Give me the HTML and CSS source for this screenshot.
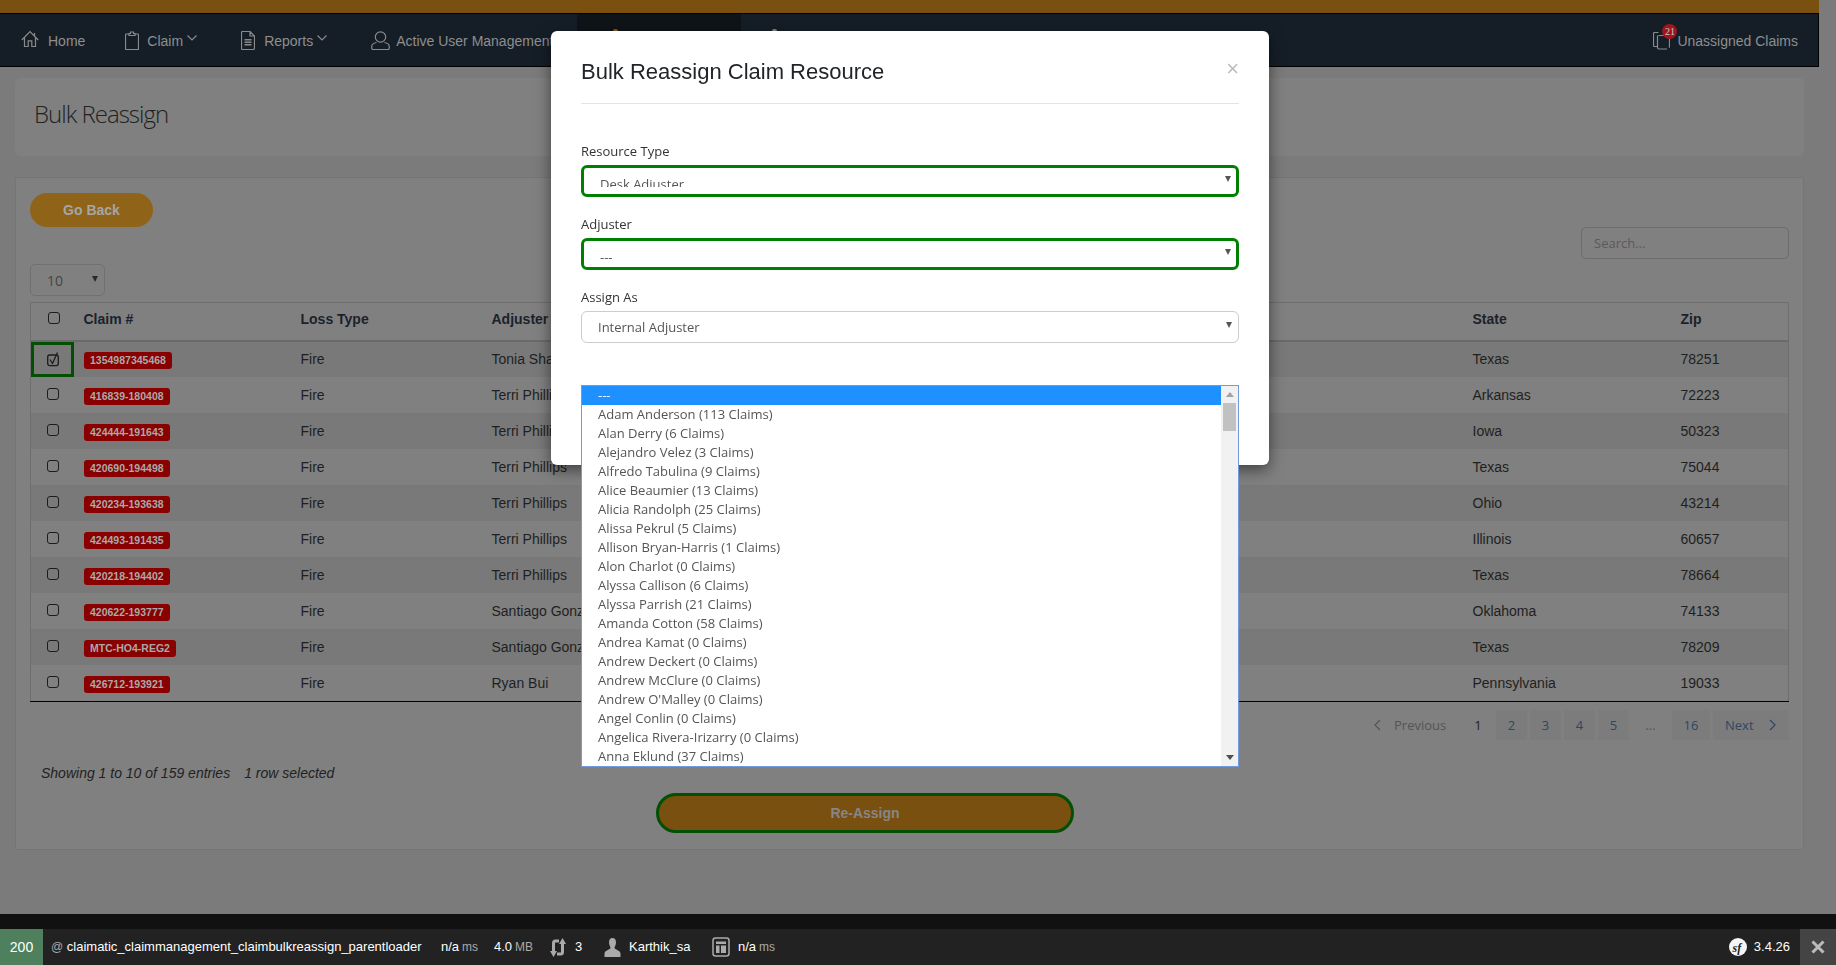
FILE: index.html
```html
<!DOCTYPE html>
<html lang="en">
<head>
<meta charset="utf-8">
<title>Bulk Reassign</title>
<link rel="stylesheet" href="styles.css">
</head>
<body>
<div class="page">
  <div class="topbar"></div>
  <nav class="nav">
    <a class="nav-item nav-home">
      <svg class="ic" width="18" height="18" viewBox="0 0 18 18"><path d="M.8 10 9 1.500 17.200 10M3.500 7.500v9h3.700v-5.700h3.600v5.700h3.700v-9M13.500 3v3"/></svg>
      <span>Home</span>
    </a>
    <a class="nav-item nav-claim">
      <svg class="ic" width="14" height="19" viewBox="0 0 14 19"><path d="M4 3H1a.5.5 0 0 0-.5.5v14.500a1 1 0 0 0 .5.500h12a.5.5 0 0 0 .5-.5V3.500A.5.5 0 0 0 13 3h-3M4 4.500V2.500h1.500V1h3v1.500H10v2z"/></svg>
      <span>Claim</span>
      <svg class="ic chev" width="10" height="6" viewBox="0 0 10 6"><path d="M.5.500 5 5l4.500-4.500"/></svg>
    </a>
    <a class="nav-item nav-reports">
      <svg class="ic" width="14" height="19" viewBox="0 0 14 19"><path d="M1.500.5h7.500l4.500 4.500v12a1.500 1.500 0 0 1-1.500 1.500H1.500A1 1 0 0 1 .5 17.500v-16a1 1 0 0 1 1-1zM9 .5V5h4.500"/><path class="bars" d="M3.500 8h7v1.500h-7zM3.500 10.500h7V12h-7zM3.500 13h7v1.500h-7z"/></svg>
      <span>Reports</span>
      <svg class="ic chev" width="10" height="6" viewBox="0 0 10 6"><path d="M.5.500 5 5l4.500-4.500"/></svg>
    </a>
    <a class="nav-item nav-users">
      <svg class="ic" width="19" height="19" viewBox="0 0 19 19"><circle cx="9.500" cy="6" r="5.200"/><path d="M5.500 11.500C2.500 12 .7 13.500.7 15.800v1.200c0 1 .7 1.500 1.500 1.500h14.600c.8 0 1.500-.5 1.500-1.500v-1.200c0-2.300-1.800-3.800-4.800-4.300"/></svg>
      <span>Active User Management</span>
    </a>
    <a class="nav-active"><i class="tip tip-orange"></i></a>
    <a class="nav-next"><i class="tip tip-gray"></i></a>
    <a class="nav-item nav-right">
      <span class="stack">
        <svg class="ic" width="17" height="19" viewBox="0 0 17 19"><path d="M4.500 15.500H1.500a1 1 0 0 1-1-1V2.500a1 1 0 0 1 1-1h4M5.500 4.500h10a1 1 0 0 1 1 1v10c0 .5-.2.7-.5 1M4.500 4.500v12a1.500 1.500 0 0 0 1.500 1.500h8"/></svg>
        <b class="count">21</b>
      </span>
      <span>Unassigned Claims</span>
    </a>
  </nav>

  <main class="content">
    <header class="card title-card"><h1>Bulk Reassign</h1></header>
    <section class="card main-card">
      <a class="go-back">Go Back</a>
      <div class="tools">
        <div class="length"><span>10</span><i class="caret"></i></div>
        <div class="search">Search...</div>
      </div>
      <table class="grid">
        <colgroup>
          <col class="c-check"><col class="c-claim"><col class="c-loss"><col class="c-adj"><col class="c-state"><col class="c-zip">
        </colgroup>
        <thead>
          <tr><th class="check-head"><span class="box"></span></th><th>Claim #</th><th>Loss Type</th><th>Adjuster</th><th>State</th><th>Zip</th></tr>
        </thead>
        <tbody>
          <tr class="odd"><td class="checked"><svg class="tick" width="13" height="15" viewBox="0 0 13 15"><rect x=".7" y="3" width="10.600" height="10.600" rx="2"/><path d="M3 7.500 5.500 11.500 10.500 .5"/></svg></td><td><span class="badge">1354987345468</span></td><td>Fire</td><td>Tonia Shaffer</td><td>Texas</td><td>78251</td></tr>
          <tr><td><span class="box"></span></td><td><span class="badge">416839-180408</span></td><td>Fire</td><td>Terri Phillips</td><td>Arkansas</td><td>72223</td></tr>
          <tr class="odd"><td><span class="box"></span></td><td><span class="badge">424444-191643</span></td><td>Fire</td><td>Terri Phillips</td><td>Iowa</td><td>50323</td></tr>
          <tr><td><span class="box"></span></td><td><span class="badge">420690-194498</span></td><td>Fire</td><td>Terri Phillips</td><td>Texas</td><td>75044</td></tr>
          <tr class="odd"><td><span class="box"></span></td><td><span class="badge">420234-193638</span></td><td>Fire</td><td>Terri Phillips</td><td>Ohio</td><td>43214</td></tr>
          <tr><td><span class="box"></span></td><td><span class="badge">424493-191435</span></td><td>Fire</td><td>Terri Phillips</td><td>Illinois</td><td>60657</td></tr>
          <tr class="odd"><td><span class="box"></span></td><td><span class="badge">420218-194402</span></td><td>Fire</td><td>Terri Phillips</td><td>Texas</td><td>78664</td></tr>
          <tr><td><span class="box"></span></td><td><span class="badge">420622-193777</span></td><td>Fire</td><td>Santiago Gonzalez</td><td>Oklahoma</td><td>74133</td></tr>
          <tr class="odd"><td><span class="box"></span></td><td><span class="badge">MTC-HO4-REG2</span></td><td>Fire</td><td>Santiago Gonzalez</td><td>Texas</td><td>78209</td></tr>
          <tr class="last"><td><span class="box"></span></td><td><span class="badge">426712-193921</span></td><td>Fire</td><td>Ryan Bui</td><td>Pennsylvania</td><td>19033</td></tr>
        </tbody>
      </table>
      <ul class="pager">
        <li class="pg-prev"><svg class="pg-chev" width="7" height="12" viewBox="0 0 7 12"><path d="M6 1 1 6l5 5"/></svg><span>Previous</span></li>
        <li class="pg-cur">1</li>
        <li class="pg">2</li>
        <li class="pg">3</li>
        <li class="pg">4</li>
        <li class="pg">5</li>
        <li class="pg-gap">...</li>
        <li class="pg pg-wide">16</li>
        <li class="pg pg-next"><span>Next</span><svg class="pg-chev" width="7" height="12" viewBox="0 0 7 12"><path d="m1 1 5 5-5 5"/></svg></li>
      </ul>
      <p class="info"><span>Showing 1 to 10 of 159 entries</span><span>1 row selected</span></p>
      <a class="reassign">Re-Assign</a>
    </section>
  </main>
</div>

<div class="modal">
  <div class="modal-head">
    <h2>Bulk Reassign Claim Resource</h2>
    <span class="close">×</span>
  </div>
  <div class="modal-body">
    <label class="lbl">Resource Type</label>
    <div class="sel sel-green"><span class="sel-val sel-cut">Desk Adjuster</span><i class="caret"></i></div>
    <label class="lbl">Adjuster</label>
    <div class="sel sel-green"><span class="sel-val">---</span><i class="caret"></i></div>
    <label class="lbl">Assign As</label>
    <div class="sel sel-plain"><span>Internal Adjuster</span><i class="caret"></i></div>
  </div>
  <div class="listbox">
    <ul class="opts">
      <li class="sel-opt">---</li>
      <li>Adam Anderson (113 Claims)</li>
      <li>Alan Derry (6 Claims)</li>
      <li>Alejandro Velez (3 Claims)</li>
      <li>Alfredo Tabulina (9 Claims)</li>
      <li>Alice Beaumier (13 Claims)</li>
      <li>Alicia Randolph (25 Claims)</li>
      <li>Alissa Pekrul (5 Claims)</li>
      <li>Allison Bryan-Harris (1 Claims)</li>
      <li>Alon Charlot (0 Claims)</li>
      <li>Alyssa Callison (6 Claims)</li>
      <li>Alyssa Parrish (21 Claims)</li>
      <li>Amanda Cotton (58 Claims)</li>
      <li>Andrea Kamat (0 Claims)</li>
      <li>Andrew Deckert (0 Claims)</li>
      <li>Andrew McClure (0 Claims)</li>
      <li>Andrew O'Malley (0 Claims)</li>
      <li>Angel Conlin (0 Claims)</li>
      <li>Angelica Rivera-Irizarry (0 Claims)</li>
      <li>Anna Eklund (37 Claims)</li>
    </ul>
    <div class="sbar">
      <i class="sb-up"></i>
      <i class="sb-thumb"></i>
      <i class="sb-down"></i>
    </div>
  </div>
</div>

<footer class="debug">
  <div class="debug-strip"></div>
  <div class="debug-bar">
    <span class="status">200</span>
    <span class="route"><em>@</em> claimatic_claimmanagement_claimbulkreassign_parentloader</span>
    <span class="metric m-time"><b>n/a</b><em>ms</em></span>
    <span class="metric m-mem"><b>4.0</b><em>MB</em></span>
    <span class="metric m-req">
      <svg width="16" height="21" viewBox="0 0 16 21"><path class="dbg-stroke" d="M9 4H5.500Q3.500 4 3.500 6v9M7 17h3.500q2 0 2-2V6"/><path class="dbg" d="M0 14h7l-3.500 6zM16 7H9l3.500-6z"/></svg>
      <b>3</b>
    </span>
    <span class="metric m-user">
      <svg width="17" height="19" viewBox="0 0 17 19"><path class="dbg" d="M8.500 0C6 0 5 2 5 4.500S6.500 9 6.500 10c0 1.500-6 2.500-6 5.500V19h16v-3.500c0-3-6-4-6-5.500 0-1 1.500-3 1.500-5.500S11 0 8.500 0z"/></svg>
      <b>Karthik_sa</b>
    </span>
    <span class="metric m-twig">
      <svg width="18" height="20" viewBox="0 0 18 20"><rect class="dbg-line" x="1" y="1" width="16" height="18" rx="2.500"/><path class="dbg" d="M4 4.500h10v2.500H4zM4 8.500h3.500V16H4zM9 8.500h5V16H9z"/></svg>
      <b>n/a</b><em>ms</em>
    </span>
    <span class="sf">
      <svg width="18" height="18" viewBox="0 0 18 18"><circle class="sf-disc" cx="9" cy="9" r="9"/><text class="sf-text" x="3.500" y="13.500">sf</text></svg>
      <b>3.4.26</b>
    </span>
    <span class="debug-close">
      <svg width="14" height="14" viewBox="0 0 14 14"><path d="M1.500 1.500l11 11M12.500 1.500l-11 11"/></svg>
    </span>
  </div>
</footer>
</body>
</html>
```
FILE: styles.css
```css
* { box-sizing: border-box; }
html, body { margin: 0; padding: 0; }
body {
  width: 1836px;
  height: 965px;
  overflow: hidden;
  background: #7b7b7b;
  font-family: "Liberation Sans", Arial, sans-serif;
  font-size: 14px;
  color: #222;
}
h1, h2, p, ul { margin: 0; padding: 0; }
ul { list-style: none; }
i, em { font-style: normal; }

.page { width: 1819px; }
.topbar { height: 13px; background: #7a5010; }

/* nav */
.nav {
  height: 54px;
  display: flex;
  align-items: stretch;
  padding-left: 21px;
  background: #151e27;
  border: 1px solid #000;
  border-left-width: 0;
  color: #8e8e8e;
}
.nav-item { display: flex; align-items: center; }
.nav-item > span { line-height: 18px; }
.nav-item > span:not(.stack) { margin-top: 2px; }
.ic { fill: none; stroke: #8a8a8a; stroke-width: 1.200; flex: none; }
.ic .bars { fill: #8a8a8a; stroke: none; }
.chev { margin-left: 4px; margin-top: -4px; }
.nav-home { gap: 9px; margin-right: 40px; }
.nav-home .ic { margin-top: -2px; }
.nav-claim { margin-right: 44px; }
.nav-claim > span { margin-left: 8px; }
.nav-reports { margin-right: 44px; }
.nav-reports > span { margin-left: 9px; }
.nav-users { gap: 6px; margin-right: 24px; }
.nav-active { width: 164px; background: #0f1418; position: relative; }
.nav-next { width: 60px; position: relative; }
.tip { position: absolute; top: 15px; width: 5px; height: 3px; border-radius: 2px 2px 0 0; }
.tip-orange { left: 36px; background: #8c5a12; }
.tip-gray { left: 31px; background: #888; }
.nav-right { margin-left: auto; margin-right: 20px; gap: 7px; }
.stack { position: relative; display: flex; }
.count {
  position: absolute;
  left: 9px;
  top: -7px;
  width: 15px;
  height: 15px;
  border-radius: 50%;
  background: #a0141e;
  color: #c8c8c8;
  font: 10px/15px "Liberation Serif", serif;
  text-align: center;
}

/* content */
.content { padding: 11px 15px 0; }
.card { background: #808080; border-radius: 5px; }
.title-card {
  height: 78px;
  margin-bottom: 21px;
  padding: 0 0 6px 19px;
  display: flex;
  align-items: center;
}
h1 {
  font: 300 24px/32px "Open Sans", sans-serif;
  letter-spacing: -1px;
  color: #222;
}
.main-card {
  height: 673px;
  border: 1px solid #757575;
  border-radius: 2px;
  padding: 15px 14px 0;
}
.go-back {
  display: block;
  width: 123px;
  height: 34px;
  border-radius: 17px;
  background: #8f6318;
  color: #a6a6a6;
  font: 700 14px/34px "Liberation Sans", sans-serif;
  text-align: center;
}
.tools { display: flex; justify-content: space-between; align-items: flex-start; height: 75px; }
.length {
  width: 75px;
  height: 32px;
  margin-top: 37px;
  padding: 2px 6px 0 16px;
  border: 1px solid #707070;
  border-radius: 5px;
  display: flex;
  align-items: center;
  justify-content: space-between;
  color: #454545;
  font: 14px/28px "Open Sans", sans-serif;
}
.length .caret { border-top-color: #2a2a2a; }
.caret {
  width: 0;
  height: 0;
  border: 3px solid transparent;
  border-top: 6px solid #555;
  border-bottom-width: 0;
  margin-top: -5px;
}
.search {
  width: 208px;
  height: 32px;
  padding-left: 12px;
  border: 1px solid #6c6c6c;
  border-radius: 5px;
  color: #5a5a5a;
  font: 13px/30px "Open Sans", sans-serif;
}

/* table */
.grid {
  width: 1758px;
  table-layout: fixed;
  border-collapse: collapse;
  border: 1px solid #6e6e6e;
  border-bottom: 1.500px solid #000;
}
.c-check { width: 43px; }
.c-claim { width: 217px; }
.c-loss { width: 191px; }
.c-adj { width: 981px; }
.c-state { width: 208px; }
.c-zip { width: 118px; }
.grid th {
  height: 38px;
  padding: 0 10px 4px;
  text-align: left;
  font-weight: 700;
  color: #1b222b;
  border-bottom: 2px solid #6a6a6a;
}
.grid td { height: 36px; padding: 0 10px; white-space: nowrap; color: #1f1f1f; }
.grid .last td { height: 37px; }
.grid tbody tr { background: #808080; }
.grid tbody tr.odd { background: #797979; }
.grid td:first-child { padding: 0 0 0 16px; }
.grid th.check-head { padding: 0 0 4px 17px; }
.grid td.checked { padding: 0 0 0 16px; box-shadow: inset 0 0 0 3px #034f03; }
.box { display: block; width: 12px; height: 12px; border: 1.500px solid #1c1c1c; border-radius: 3px; margin-top: -2px; }
.tick { display: block; fill: none; stroke: #1c1c1c; stroke-width: 1.300; margin-top: 1px; }
.badge {
  display: inline-block;
  height: 17px;
  padding: 0 6.500px;
  border-radius: 3px;
  background: #880000;
  color: #a9a9a9;
  font: 700 10.500px/17px "Liberation Sans", sans-serif;
  vertical-align: -2px;
}

/* pager */
.pager {
  display: flex;
  justify-content: flex-end;
  gap: 3px;
  height: 30px;
  margin-top: 8px;
  font: 13px/30px "Open Sans", sans-serif;
  color: #2f4763;
  text-align: center;
}
.pg { width: 31px; background: #7c7c7c; }
.pg-wide { width: 38px; }
.pg-next { width: 76px; display: flex; padding-left: 12px; gap: 15px; align-items: center; }
.pg-cur { width: 30px; color: #222; }
.pg-gap { width: 37px; color: #555; }
.pg-prev { width: 94px; display: flex; align-items: center; padding-left: 8px; gap: 13px; color: #555; }
.pg-chev { fill: none; stroke: currentColor; stroke-width: 1.200; }
.info {
  display: flex;
  gap: 14px;
  margin-top: 24px;
  padding-left: 11px;
  font-style: italic;
  line-height: 18px;
  color: #222;
}
.reassign {
  display: block;
  width: 418px;
  height: 40px;
  margin: 11px 0 0 626px;
  border: 3px solid #034f03;
  border-radius: 20px;
  background: #7a5010;
  color: #868686;
  font: 700 14px/34px "Liberation Sans", sans-serif;
  text-align: center;
}

/* modal */
.modal {
  position: fixed;
  left: 551px;
  top: 31px;
  width: 718px;
  height: 434px;
  padding: 0 30px;
  background: #fff;
  border-radius: 6px;
  box-shadow: 0 5px 15px rgba(0, 0, 0, .5);
  color: #212529;
}
.modal-head {
  height: 73px;
  border-bottom: 1px solid #e4e4e4;
  display: flex;
  justify-content: space-between;
  align-items: flex-start;
}
h2 { font: 400 22px/26px "Liberation Sans", sans-serif; margin-top: 28px; color: #212529; }
.close { font: 22px/22px "Liberation Sans", sans-serif; color: #bdbdbd; margin: 27px 0 0; }
.modal-body { padding-top: 38px; }
.lbl {
  display: block;
  height: 18px;
  margin-bottom: 5px;
  font: 13px/18px "Open Sans", sans-serif;
  color: #333;
}
.sel {
  height: 32px;
  margin-bottom: 18px;
  border-radius: 6px;
  display: flex;
  justify-content: space-between;
  align-items: center;
  font: 13px/18px "Open Sans", sans-serif;
  color: #555;
}
.sel-green { border: 3px solid #008000; padding: 0 5px 0 16px; }
.sel-val { align-self: flex-start; margin-top: 7px; }
.sel-cut { height: 12px; overflow: hidden; }
.sel-plain { border: 1px solid #ccc; padding: 0 6px 0 16px; }
.listbox {
  position: absolute;
  left: 30px;
  top: 354px;
  width: 658px;
  height: 382px;
  display: flex;
  background: #fff;
  border: 1px solid #7199de;
  font: 13px/19px "Open Sans", sans-serif;
  color: #555;
}
.opts { flex: 1; overflow: hidden; }
.opts li { height: 19px; padding-left: 16px; white-space: nowrap; }
.opts .sel-opt { background: #1e90ff; color: #fff; }
.sbar {
  width: 17px;
  background: #f1f1f1;
  display: flex;
  flex-direction: column;
  align-items: center;
}
.sb-up, .sb-down { width: 0; height: 0; border: 4px solid transparent; }
.sb-up { border-bottom: 5px solid #a3a3a3; border-top-width: 0; margin-top: 6px; }
.sb-down { border-top: 5px solid #505050; border-bottom-width: 0; margin-top: auto; margin-bottom: 6px; }
.sb-thumb { width: 13px; height: 28px; margin-top: 6px; background: #c1c1c1; }

/* debug toolbar */
.debug { position: fixed; left: 0; right: 0; bottom: 0; }
.debug-strip { height: 15px; background: #111; }
.debug-bar {
  height: 36px;
  display: flex;
  align-items: center;
  background: #222;
  color: #fff;
  font-size: 13px;
  line-height: 36px;
}
.debug-bar b { font-weight: 400; }
.debug-bar em { color: #aaa; font-size: 12px; }
.status { width: 43px; background: #4f805d; text-align: center; color: #fff; font-size: 14px; }
.route { margin-left: 8px; width: 390px; white-space: nowrap; }
.metric { display: flex; align-items: center; gap: 3px; }
.m-time { width: 53px; }
.m-mem { width: 56px; }
.m-req { width: 54px; gap: 9px; }
.m-user { width: 108px; gap: 8px; }
.m-twig svg { margin-right: 5px; }
.dbg { fill: #aaa; }
.dbg-stroke { fill: none; stroke: #aaa; stroke-width: 3; }
.dbg-line { fill: none; stroke: #aaa; stroke-width: 1.500; }
.sf { margin-left: auto; display: flex; align-items: center; gap: 7px; }
.sf-disc { fill: #f5f5f5; }
.sf-text { font: italic 700 12px "Liberation Serif", serif; fill: #222; }
.debug-close {
  width: 36px;
  height: 36px;
  margin-left: 10px;
  background: #444;
  display: flex;
  align-items: center;
  justify-content: center;
}
.debug-close path { fill: none; stroke: #bbb; stroke-width: 3; }
```
